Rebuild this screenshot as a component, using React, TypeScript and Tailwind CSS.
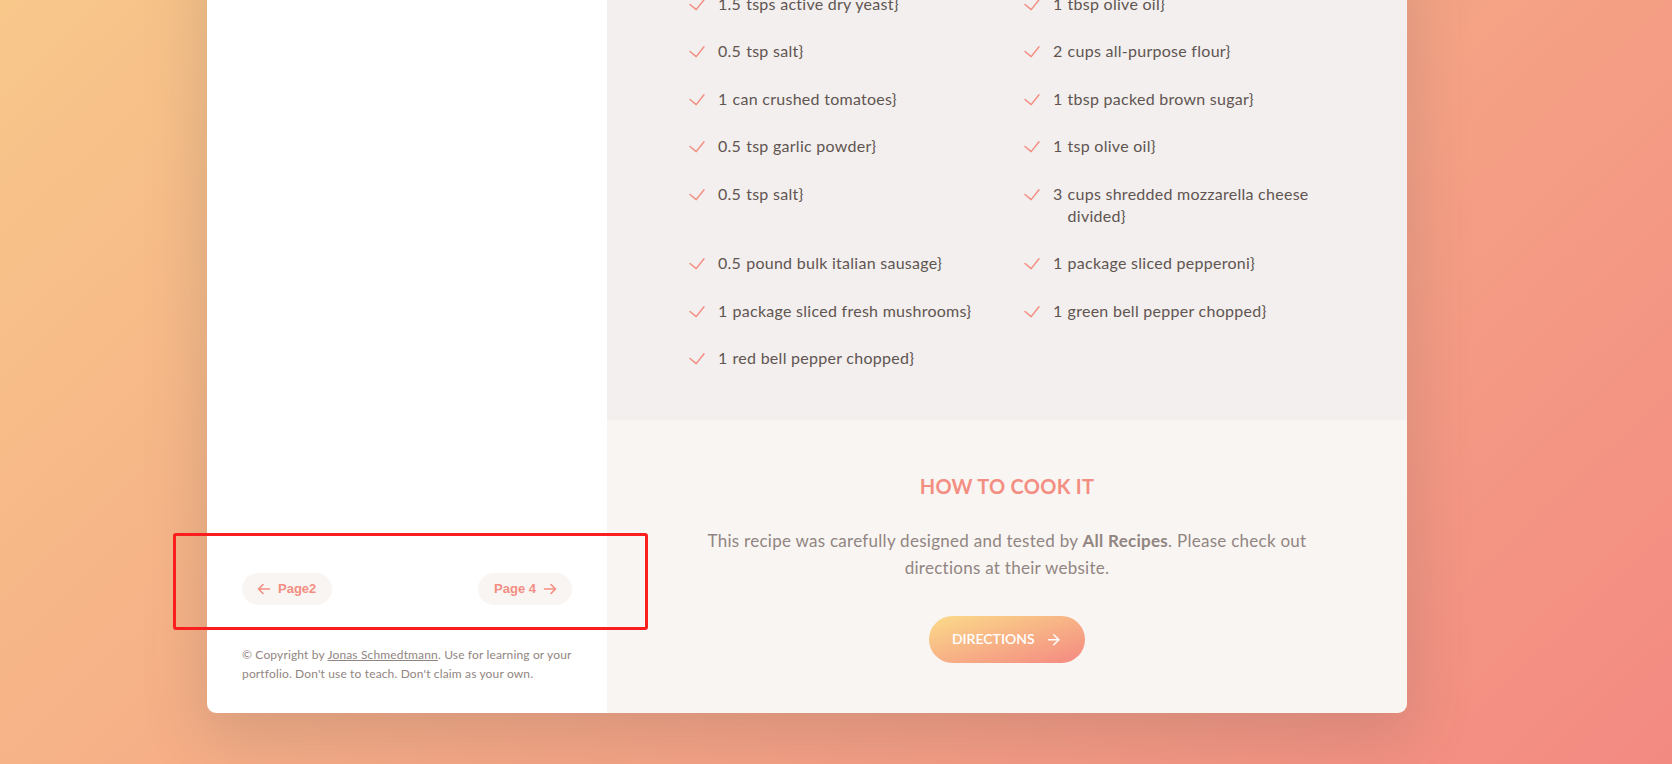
import { ArrowRight } from 'lucide-react';

const ingredients = [
  { qty: '1.5', desc: 'tsps active dry yeast}' },
  { qty: '1', desc: 'tbsp olive oil}' },
  { qty: '0.5', desc: 'tsp salt}' },
  { qty: '2', desc: 'cups all-purpose flour}' },
  { qty: '1', desc: 'can crushed tomatoes}' },
  { qty: '1', desc: 'tbsp packed brown sugar}' },
  { qty: '0.5', desc: 'tsp garlic powder}' },
  { qty: '1', desc: 'tsp olive oil}' },
  { qty: '0.5', desc: 'tsp salt}' },
  { qty: '3', desc: 'cups shredded mozzarella cheese divided}' },
  { qty: '0.5', desc: 'pound bulk italian sausage}' },
  { qty: '1', desc: 'package sliced pepperoni}' },
  { qty: '1', desc: 'package sliced fresh mushrooms}' },
  { qty: '1', desc: 'green bell pepper chopped}' },
  { qty: '1', desc: 'red bell pepper chopped}' },
];

function CheckIcon() {
  return (
    <svg
      viewBox="0 0 20 20"
      className="mt-[1px] mr-[11px] h-5 w-5 shrink-0"
      fill="none"
      stroke="#f38e82"
      strokeWidth="1.5"
      strokeLinecap="round"
      strokeLinejoin="round"
    >
      <polyline points="3,10.5 9.2,15.6 17,5.8" />
    </svg>
  );
}

function PageArrow({ dir }: { dir: 'left' | 'right' }) {
  return (
    <svg
      viewBox="0 0 16 16"
      className="mx-[2px] h-4 w-4"
      fill="none"
      stroke="currentColor"
      strokeWidth="1.6"
      strokeLinecap="round"
      strokeLinejoin="round"
    >
      {dir === 'left' ? (
        <path d="M13.5 8H2.5M7 3.5 2.5 8 7 12.5" />
      ) : (
        <path d="M2.5 8h11M9 3.5 13.5 8 9 12.5" />
      )}
    </svg>
  );
}

export default function App() {
  return (
    <div className="relative h-[764px] overflow-hidden bg-[linear-gradient(137deg,#f8c78a,#f38a82)] font-['Lato',sans-serif] text-[#615551]">
      <div className="ml-[207px] -mt-[57px] grid w-[1200px] grid-cols-[400px_800px] overflow-hidden rounded-b-[9px] shadow-[0_20px_60px_5px_rgba(97,85,81,0.2)]">
        {/* 搜索结果栏 */}
        <div className="flex flex-col justify-end bg-white pb-[30px]">
          <div className="flex items-center justify-between px-[35px]">
            <button className="flex items-center rounded-full bg-[#f9f5f3] px-3 py-2 font-['Liberation_Sans',sans-serif] text-[13px] leading-4 font-bold text-[#f38e82]">
              <PageArrow dir="left" />
              <span className="mx-1">Page2</span>
            </button>
            <button className="flex items-center rounded-full bg-[#f9f5f3] px-3 py-2 font-['Liberation_Sans',sans-serif] text-[13px] leading-4 font-bold text-[#f38e82]">
              <span className="mx-1">Page 4</span>
              <PageArrow dir="right" />
            </button>
          </div>
          <p className="mt-10 px-[35px] text-[12px] leading-[1.6] tracking-[0.15px] text-[#918581]">
            © Copyright by{' '}
            <a href="#" className="underline text-[#918581]">
              Jonas Schmedtmann
            </a>
            . Use for learning or your portfolio. Don't use to teach. Don't claim as your own.
          </p>
        </div>

        {/* 菜谱 */}
        <div className="tracking-[0.27px]">
          <div className="bg-[#f2efee] px-20 pt-[50px] pb-[50px] text-[16px] leading-[1.4]">
            <ul className="grid grid-cols-2 gap-x-[30px] gap-y-[25px]">
              {ingredients.map((ing, i) => (
                <li key={i} className="flex">
                  <CheckIcon />
                  <div className="mr-[5px] shrink-0">{ing.qty}</div>
                  <div>{ing.desc}</div>
                </li>
              ))}
            </ul>
          </div>

          <div className="flex flex-col items-center bg-[#f9f5f3] px-[100px] py-[50px]">
            <h2 className="mb-[25px] text-center text-[20px] leading-[1.6] font-bold uppercase text-[#f38e82]">
              How to cook it
            </h2>
            <p className="mb-[35px] text-center text-[17px] leading-[1.6] text-[#918581]">
              This recipe was carefully designed and tested by{' '}
              <span className="font-bold">All Recipes</span>. Please check out directions at their
              website.
            </p>
            <a
              href="#"
              className="flex items-center gap-[10px] rounded-full bg-[linear-gradient(to_right_bottom,#fbdb89,#f48982)] px-[22.5px] py-[12.5px] text-[14px] leading-[1.6] font-semibold uppercase tracking-normal text-white"
            >
              <span>Directions</span>
              <ArrowRight size={17.5} strokeWidth={2} />
            </a>
          </div>
        </div>
      </div>

      {/* 标注框 */}
      <div className="pointer-events-none absolute left-[173px] top-[533px] h-[97px] w-[475px] rounded-[3px] border-[3px] border-[#fa1e1e]" />
    </div>
  );
}
